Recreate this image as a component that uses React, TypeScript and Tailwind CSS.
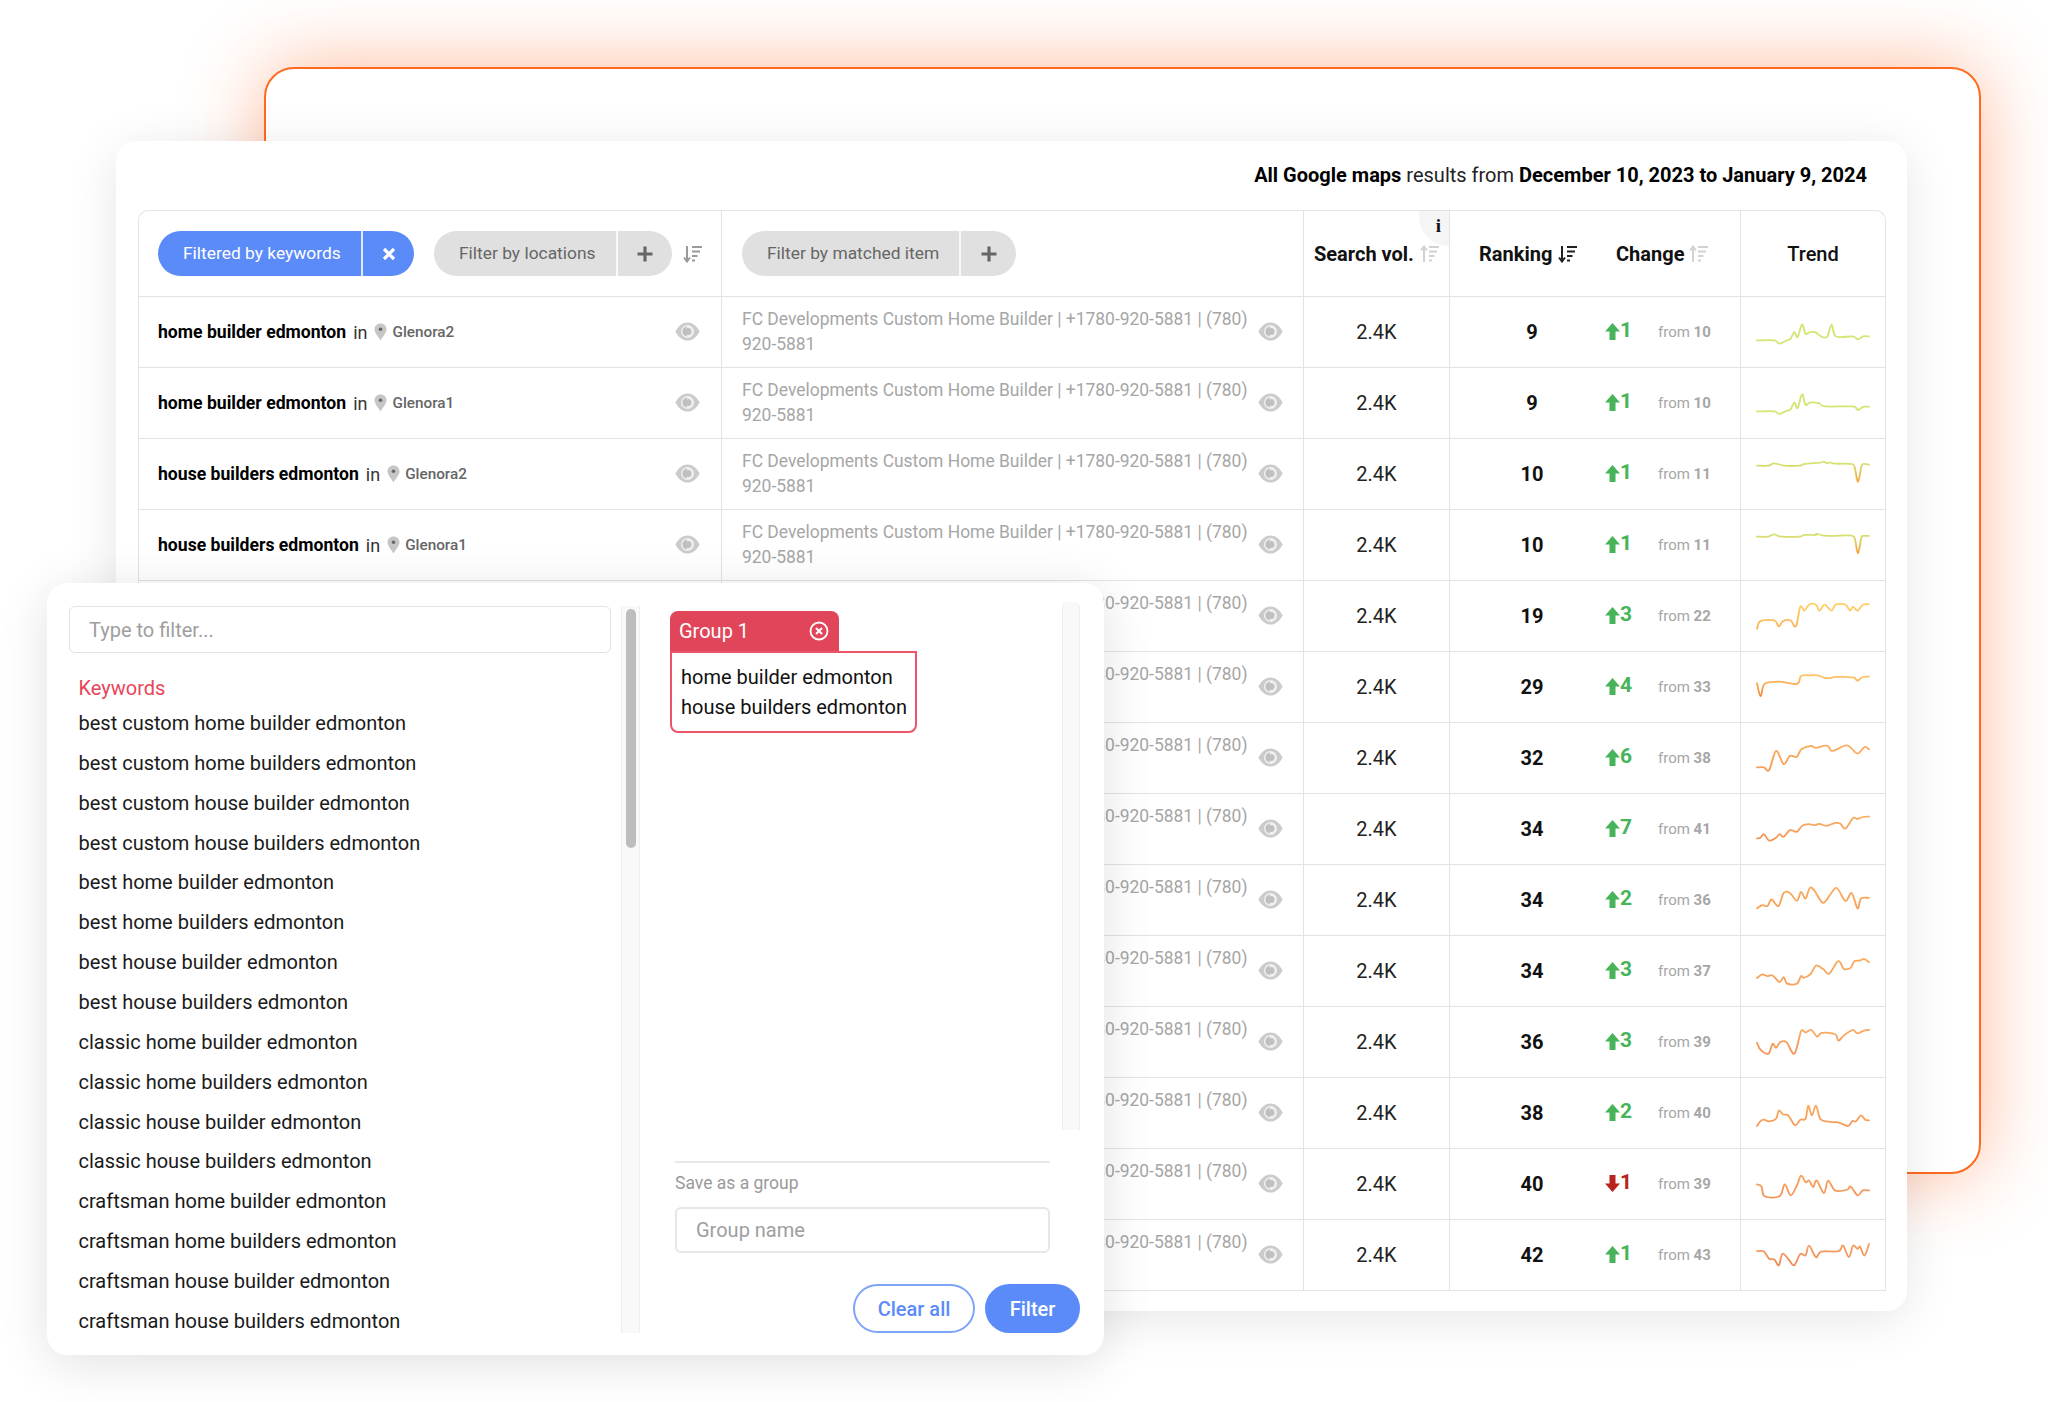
import React from 'react'

const keywords = [
  'best custom home builder edmonton',
  'best custom home builders edmonton',
  'best custom house builder edmonton',
  'best custom house builders edmonton',
  'best home builder edmonton',
  'best home builders edmonton',
  'best house builder edmonton',
  'best house builders edmonton',
  'classic home builder edmonton',
  'classic home builders edmonton',
  'classic house builder edmonton',
  'classic house builders edmonton',
  'craftsman home builder edmonton',
  'craftsman home builders edmonton',
  'craftsman house builder edmonton',
  'craftsman house builders edmonton',
]

type Row = {
  keyword?: string
  location?: string
  rank: number
  change: number
  from: number
  top: string
  bottom: string
  line: string
}

// trend lines are in a 323x213 box, one box per table row
const rows: Row[] = [
  { keyword: 'home builder edmonton', location: 'Glenora2', rank: 9, change: 1, from: 10, top: '#cfe673', bottom: '#d4e676', line: '0,132 50,132 64,142 86,132 96,128 108,107 117,122 130,84 140,112 152,107 167,107 189,122 203,120 215,84 228,120 276,120 291,129 306,120 323,120' },
  { keyword: 'home builder edmonton', location: 'Glenora1', rank: 9, change: 1, from: 10, top: '#cfe673', bottom: '#d4e676', line: '0,132 50,132 64,140 86,130 96,127 108,105 117,122 130,80 140,112 152,105 178,107 196,117 276,117 291,128 306,118 323,118' },
  { keyword: 'house builders edmonton', location: 'Glenora2', rank: 10, change: 1, from: 11, top: '#d4e676', bottom: '#f3a53f', line: '0,81 32,81 50,74 79,81 123,81 137,76 181,72 192,69 203,74 211,71 225,75 269,76 281,84 291,131 301,84 307,76 323,78' },
  { keyword: 'house builders edmonton', location: 'Glenora1', rank: 10, change: 1, from: 11, top: '#d4e676', bottom: '#f3a53f', line: '0,81 32,81 50,74 70,81 123,81 137,76 170,76 171,72 189,77 218,79 262,77 281,84 291,132 301,84 307,79 323,79' },
  { rank: 19, change: 3, from: 22, top: '#fdd068', bottom: '#fbb45c', line: '0,145 10,122 50,120 63,138 75,122 97,120 108,138 115,130 125,78 137,90 150,72 170,72 180,90 195,72 215,90 227,72 255,72 268,90 277,78 290,90 305,72 323,71' },
  { rank: 29, change: 4, from: 33, top: '#fdc668', bottom: '#f58a3c', line: '0,95 10,134 20,99 40,92 65,90 115,97 127,73 150,71 175,71 195,79 210,79 225,76 255,76 280,78 290,87 305,76 323,75' },
  { rank: 32, change: 6, from: 38, top: '#f9ae60', bottom: '#f79a56', line: '0,135 20,135 35,143 55,85 77,125 95,100 115,103 128,80 155,70 170,76 190,70 205,70 215,85 235,78 250,70 265,70 290,93 310,73 323,80' },
  { rank: 34, change: 7, from: 41, top: '#f9ae60', bottom: '#f4935a', line: '0,135 10,133 20,122 35,142 55,133 65,122 77,130 95,110 115,115 130,97 150,92 165,95 180,91 200,97 225,88 240,90 255,105 277,73 290,76 305,70 323,69' },
  { rank: 34, change: 2, from: 36, top: '#f9ac60', bottom: '#f7a05a', line: '0,132 15,122 30,125 42,105 62,125 77,85 95,85 115,109 127,82 140,102 152,70 165,77 190,115 210,92 230,70 255,109 273,85 290,132 300,102 323,100' },
  { rank: 34, change: 3, from: 37, top: '#f9ac60', bottom: '#f7a05a', line: '0,128 15,117 30,122 45,120 65,140 77,125 87,145 115,145 127,122 135,127 155,115 170,90 190,100 208,115 230,80 240,80 250,100 270,97 280,77 295,75 310,70 323,80' },
  { rank: 36, change: 3, from: 39, top: '#f9ac60', bottom: '#f4935a', line: '0,109 10,130 33,142 45,112 55,124 67,107 85,107 108,142 127,74 140,77 157,70 173,90 187,79 225,82 235,102 250,87 275,70 290,80 310,71 323,70' },
  { rank: 38, change: 2, from: 40, top: '#f9ac60', bottom: '#f59a5c', line: '0,146 10,131 20,127 35,132 55,124 63,99 75,111 90,114 110,144 125,127 140,124 148,84 158,114 170,84 182,124 200,132 220,134 240,137 263,146 275,131 285,132 300,114 312,127 323,129' },
  { rank: 40, change: -1, from: 39, top: '#f7a562', bottom: '#f4935a', line: '0,108 13,114 22,144 65,144 80,108 97,141 115,111 127,81 140,101 150,96 162,116 172,96 193,134 205,96 225,126 260,124 270,114 290,141 305,126 323,126' },
  { rank: 42, change: 1, from: 43, top: '#f5a36a', bottom: '#ee8a50', line: '0,95 20,96 35,118 50,120 63,138 73,103 90,118 107,138 125,103 140,108 150,78 170,113 185,96 235,95 248,78 265,113 277,78 290,88 297,81 310,108 323,73' },
]

// catmull-rom through the points, so that the peaks stay where they are
function smooth(line: string) {
  const pts = line.split(' ').map(p => p.split(',').map(Number))
  let d = `M${pts[0][0]} ${pts[0][1]}`
  for (let i = 0; i < pts.length - 1; i++) {
    const a = pts[Math.max(i - 1, 0)]
    const b = pts[i]
    const c = pts[i + 1]
    const e = pts[Math.min(i + 2, pts.length - 1)]
    d += ` C${b[0] + (c[0] - a[0]) / 6} ${b[1] + (c[1] - a[1]) / 6} ${c[0] - (e[0] - b[0]) / 6} ${c[1] - (e[1] - b[1]) / 6} ${c[0]} ${c[1]}`
  }
  return d
}

function Trend({ row, id }: { row: Row; id: number }) {
  return (
    <svg viewBox="0 0 323 213" preserveAspectRatio="none" className="w-[112px] h-[70px] overflow-visible">
      <defs>
        <linearGradient id={`trend-${id}`} x1="0" y1="0" x2="0" y2="1">
          <stop offset="0" stopColor={row.top} />
          <stop offset="1" stopColor={row.bottom} />
        </linearGradient>
      </defs>
      <path d={smooth(row.line)} fill="none" stroke={`url(#trend-${id})`} strokeWidth="5.4" strokeLinejoin="round" strokeLinecap="round" />
    </svg>
  )
}

function Eye() {
  return (
    <svg viewBox="0 0 24 18" className="w-[25px] h-[19px] shrink-0">
      <path d="M0.3 9C3.5 3.2 7.5 0.3 12 0.3S20.5 3.2 23.7 9C20.5 14.8 16.5 17.7 12 17.7S3.5 14.8 0.3 9Z" fill="#cbcbcb" />
      <circle cx="12" cy="9" r="6.2" fill="#f1f1f1" />
      <path d="M12 4.2A4.8 4.8 0 1 0 12 13.8A6.5 6.5 0 0 1 12 4.2Z" fill="#bdbdbd" />
      <circle cx="12.5" cy="9" r="3.4" fill="#c0c0c0" />
    </svg>
  )
}

function Pin() {
  return (
    <svg viewBox="0 0 13 18" className="w-[13px] h-[18px] shrink-0">
      <path d="M6.5 0.5C3 0.5 0.5 3 0.5 6.3C0.5 10 4.5 14 6.5 17.5C8.5 14 12.5 10 12.5 6.3C12.5 3 10 0.5 6.5 0.5Z" fill="#c6c6c6" />
      <circle cx="6.5" cy="6.2" r="1.8" fill="#666666" />
    </svg>
  )
}

function SortIcon({ color, up }: { color: string; up?: boolean }) {
  return (
    <svg viewBox="0 0 20 18" fill="none" stroke={color} className="w-[20px] h-[18px] shrink-0">
      {up ? (
        <path d="M4 17V2M1 5.5L4 1.5L7 5.5" strokeWidth="2" />
      ) : (
        <path d="M4 1V16M1 12.5L4 16.5L7 12.5" strokeWidth="2" />
      )}
      <path d="M9 2H19M9 6.5H17M9 11H14.5M9 15.5H12" strokeWidth="2" />
    </svg>
  )
}

function ChangeArrow({ down }: { down: boolean }) {
  return (
    <svg viewBox="0 0 15 17" className={`w-[15px] h-[17px] shrink-0 ${down ? 'rotate-180' : ''}`}>
      <path d="M7.5 0L15 8.5H10.5V17H4.5V8.5H0Z" fill={down ? '#b9231b' : '#47b45a'} />
    </svg>
  )
}

function FilterPill({ label, leftWidth, rightWidth, active }: { label: string; leftWidth: string; rightWidth: string; active?: boolean }) {
  return (
    <div className={`flex h-[45px] rounded-full overflow-hidden text-[17.4px] ${active ? 'bg-[#5b8bf8] text-white' : 'bg-[#e0e0e0] text-[#666666]'}`}>
      <div className={`flex items-center pl-[25px] border-r-2 border-white/80 ${leftWidth}`}>{label}</div>
      <div className={`flex items-center justify-center ${rightWidth}`}>
        <svg viewBox="0 0 16 16" className="w-[16px] h-[16px]" stroke="currentColor" strokeWidth="3.2">
          {active ? <path d="M3 3L13 13M13 3L3 13" /> : <path d="M8 0.5V15.5M0.5 8H15.5" />}
        </svg>
      </div>
    </div>
  )
}

function TableCard() {
  return (
    <div className="absolute left-[116px] top-[141px] w-[1791px] h-[1170px] rounded-[20px] bg-white shadow-[0_8px_50px_rgba(0,0,0,0.1)]">
      <p className="pt-[22px] pr-[40px] mb-[23px] text-right text-[20px] leading-[24px] text-[#222222]">
        <b className="font-bold text-black">All Google maps</b> results from{' '}
        <b className="font-bold text-black">December 10, 2023 to January 9, 2024</b>
      </p>

      <div className="ml-[22px] w-[1748px] border-t border-x border-[#e3e3e3] rounded-t-[10px]">
        <div className="grid grid-cols-[583px_582px_146px_291px_144px] h-[86px] border-b border-[#e3e3e3]">
          <div className="flex items-center pl-[19px] border-r border-[#e3e3e3]">
            <FilterPill label="Filtered by keywords" leftWidth="w-[205px]" rightWidth="w-[51px]" active />
            <div className="w-[20px]" />
            <FilterPill label="Filter by locations" leftWidth="w-[184px]" rightWidth="w-[54px]" />
            <div className="ml-[11px]"><SortIcon color="#9a9a9a" /></div>
          </div>
          <div className="flex items-center pl-[20px] border-r border-[#e3e3e3]">
            <FilterPill label="Filter by matched item" leftWidth="w-[219px]" rightWidth="w-[55px]" />
          </div>
          <div className="relative flex items-center pl-[10px] border-r border-[#e3e3e3] text-[20px] font-bold text-[#111111]">
            <span>Search vol.</span>
            <span className="ml-[6px]"><SortIcon color="#d2d2d2" up /></span>
            <span className="absolute right-0 top-0 w-[30px] h-[35px] rounded-bl-[30px] bg-[#f5f5f5] flex justify-end pr-[8px] pt-[3px] font-['Liberation_Serif',serif] text-[19px] leading-[24px]">i</span>
          </div>
          <div className="flex items-center border-r border-[#e3e3e3] text-[20px] font-bold text-[#111111]">
            <div className="flex items-center w-[166px] pl-[29px]">
              <span>Ranking</span>
              <span className="ml-[6px]"><SortIcon color="#222222" /></span>
            </div>
            <span>Change</span>
            <span className="ml-[5px]"><SortIcon color="#d2d2d2" up /></span>
          </div>
          <div className="flex items-center justify-center text-[20px] font-medium text-[#111111]">Trend</div>
        </div>

        {rows.map((row, i) => (
          <div key={i} className="grid grid-cols-[583px_582px_146px_291px_144px] h-[71px] border-b border-[#e3e3e3]">
            <div className="flex items-center pl-[19px] pr-[21px] border-r border-[#e3e3e3]">
              {row.keyword && (
                <>
                  <span className="text-[17.6px] font-bold text-black">{row.keyword}</span>
                  <span className="ml-[7px] text-[18px] text-[#333333]">in</span>
                  <span className="ml-[7px]"><Pin /></span>
                  <span className="ml-[5px] mt-[1px] text-[15.3px] font-medium text-[#666666]">{row.location}</span>
                </>
              )}
              <span className="ml-auto mb-[2px]"><Eye /></span>
            </div>
            <div className="flex items-center pl-[20px] border-r border-[#e3e3e3]">
              <p className="w-[512px] text-[17.45px] leading-[25px] text-[#a6a6a6]">
                FC Developments Custom Home Builder | +1780-920-5881 | (780) 920-5881
              </p>
              <span className="ml-[4px] mb-[2px]"><Eye /></span>
            </div>
            <div className="flex items-center justify-center border-r border-[#e3e3e3] text-[20px] text-[#222222]">2.4K</div>
            <div className="flex items-center border-r border-[#e3e3e3]">
              <span className="w-[155px] pl-[9px] text-center text-[20px] font-bold text-[#111111]">{row.rank}</span>
              <div className={`flex items-center w-[53px] mb-[2px] text-[21px] font-bold ${row.change < 0 ? 'text-[#b9231b]' : 'text-[#47b45a]'}`}>
                <ChangeArrow down={row.change < 0} />
                <span>{Math.abs(row.change)}</span>
              </div>
              <span className="text-[15px] text-[#a6a6a6]">from <b className="font-bold">{row.from}</b></span>
            </div>
            <div className="pl-[16px]">
              <Trend row={row} id={i} />
            </div>
          </div>
        ))}
      </div>
    </div>
  )
}

function FilterPopover() {
  return (
    <div className="absolute left-[47px] top-[583px] w-[1057px] h-[772px] rounded-[20px] bg-white shadow-[0_8px_50px_rgba(0,0,0,0.12)] flex">
      <div className="flex mt-[23px] h-[727px]">
        <div className="w-[574px] pl-[22px] overflow-hidden">
          <input
            placeholder="Type to filter..."
            className="block w-[542px] h-[47px] pl-[19px] border border-[#e2e2e2] rounded-[6px] text-[20px] placeholder:text-[#9e9e9e] outline-none"
          />
          <div className="mt-[21px] pl-[9.5px]">
            <div className="h-[30px] leading-[28px] text-[20px] text-[#e8455a]">Keywords</div>
            {keywords.map(keyword => (
              <div key={keyword} className="h-[39.87px] leading-[39.87px] text-[20px] text-[#1a1a1a] whitespace-nowrap">{keyword}</div>
            ))}
          </div>
        </div>
        <div className="w-[19px] h-full bg-[#f9f9f9] border-x border-[#eeeeee] pl-[4px] pt-[3px]">
          <div className="w-[10px] h-[239px] rounded-full bg-[#bdbdbd]" />
        </div>
      </div>

      <div className="flex flex-col w-[464px] mt-[19px]">
        <div className="flex h-[528px]">
          <div className="flex-1 pl-[30px] pt-[9px]">
            <div className="flex items-center justify-between w-[169px] h-[40px] pl-[9px] pr-[10px] rounded-t-[8px] bg-[#e0455a] text-[20px] text-white">
              <span>Group 1</span>
              <svg viewBox="0 0 20 20" fill="none" stroke="white" className="w-[20px] h-[20px]">
                <circle cx="10" cy="10" r="8.5" strokeWidth="1.8" />
                <path d="M7 7L13 13M13 7L7 13" strokeWidth="2" />
              </svg>
            </div>
            <div className="flex flex-col justify-center w-[247px] h-[82px] pl-[9px] border-2 border-[#ec5468] rounded-b-[8px] text-[20px] leading-[30px] text-[#111111]">
              <div>home builder edmonton</div>
              <div>house builders edmonton</div>
            </div>
          </div>
          <div className="w-[18px] mr-[24px] bg-[#f9f9f9] border-x border-[#eeeeee] rounded-t-[6px]" />
        </div>

        <div className="mt-[31px] ml-[35px] w-[375px] border-t-2 border-[#e8e8e8]" />
        <div className="mt-[8px] ml-[35px] h-[24px] leading-[24px] text-[17.5px] text-[#9a9a9a]">Save as a group</div>
        <input
          placeholder="Group name"
          className="block mt-[12px] ml-[35px] w-[375px] h-[46px] pl-[19px] border-2 border-[#e6e6e6] rounded-[6px] text-[20px] placeholder:text-[#9e9e9e] outline-none"
        />
        <div className="flex justify-end gap-[10px] mt-[31px] pr-[24px]">
          <button className="w-[122px] h-[49px] rounded-full border-2 border-[#7ea4f8] bg-white text-[20px] font-medium text-[#5b8bf8]">Clear all</button>
          <button className="w-[95px] h-[49px] rounded-full bg-[#5b8bf8] text-[20px] font-medium text-white">Filter</button>
        </div>
      </div>
    </div>
  )
}

export default function App() {
  return (
    <div className="relative w-[2048px] h-[1402px] overflow-hidden bg-white font-['Roboto',sans-serif]">
      <div className="absolute left-[264px] top-[67px] w-[1717px] h-[1107px] rounded-[30px] border-2 border-[#ff6a1f] bg-white shadow-[0_0_80px_rgba(255,100,30,0.45)]" />
      <TableCard />
      <FilterPopover />
    </div>
  )
}
